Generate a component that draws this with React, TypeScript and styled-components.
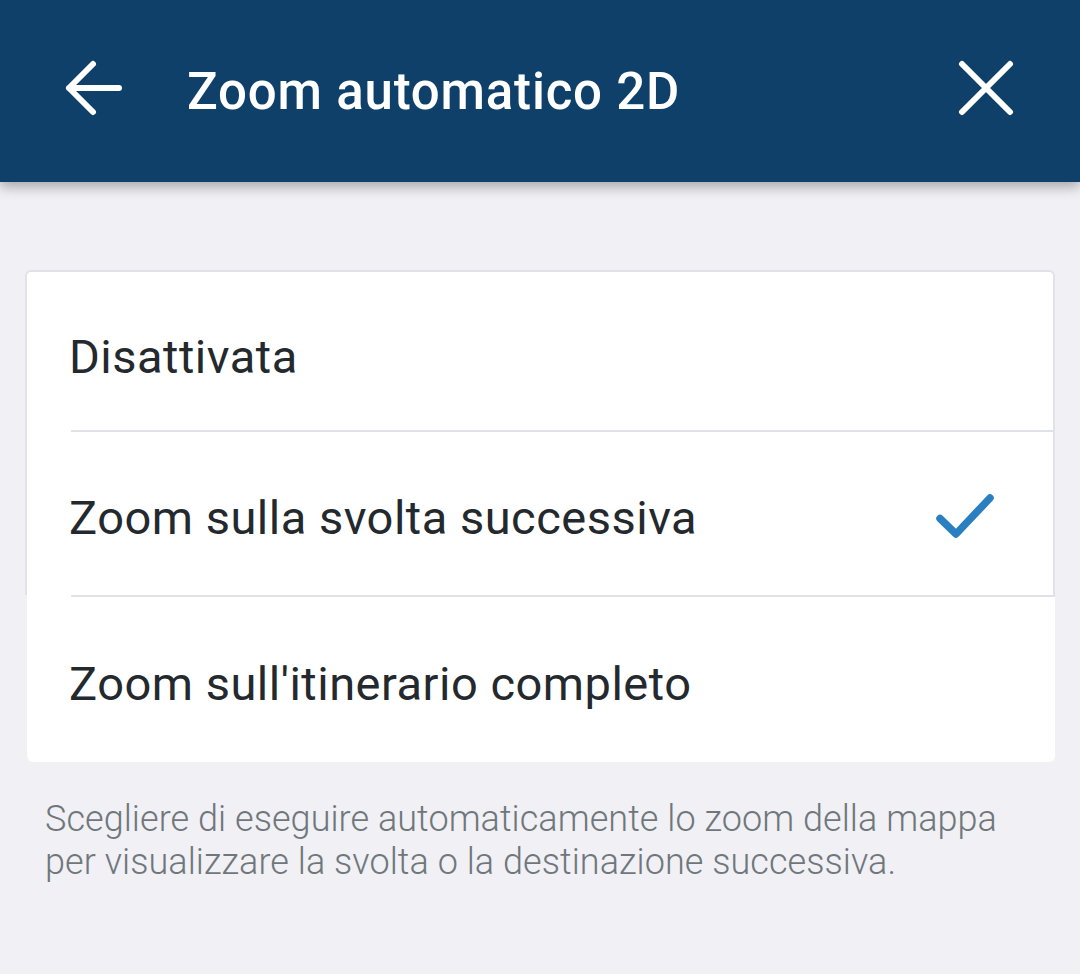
import styled, { createGlobalStyle } from "styled-components";

const GlobalStyle = createGlobalStyle`
    html, body {
        margin: 0;
        padding: 0;
        background: #f0f0f5;
        font-family: Roboto, "Noto Sans", "Liberation Sans", sans-serif;
    }
`;

const options = [
    { label: "Disattivata", selected: false, height: 158 },
    { label: "Zoom sulla svolta successiva", selected: true, height: 165 },
    { label: "Zoom sull'itinerario completo", selected: false, height: 167 },
];

const BackIcon = () => (
    <svg width="60" height="60" viewBox="0 0 60 60" fill="none">
        <path
            d="M55 30H5M29 6L5 30l24 24"
            stroke="#fff"
            strokeWidth="6"
            strokeLinecap="round"
            strokeLinejoin="round"
        />
    </svg>
);

const CloseIcon = () => (
    <svg width="56" height="56" viewBox="0 0 56 56" fill="none">
        <path
            d="M4 4l48 48M52 4L4 52"
            stroke="#fff"
            strokeWidth="6"
            strokeLinecap="round"
        />
    </svg>
);

const CheckIcon = () => (
    <svg width="68" height="50" viewBox="0 0 68 50" fill="none">
        <path
            d="M10 25.5l16 15.5L60 5"
            stroke="#2a7fc1"
            strokeWidth="7.5"
            strokeLinecap="round"
            strokeLinejoin="round"
        />
    </svg>
);

const App = () => {
    const [first, second, third] = options;
    return (
        <Page>
            <GlobalStyle />
            <Header>
                <IconButton>
                    <BackIcon />
                </IconButton>
                <Title>Zoom automatico 2D</Title>
                <CloseButton>
                    <CloseIcon />
                </CloseButton>
            </Header>
            <Content>
                <Card>
                    <BorderedGroup>
                        {[first, second].map((o, i) => (
                            <Row key={o.label} $divider={i > 0} $height={o.height}>
                                <RowText>{o.label}</RowText>
                                {o.selected && (
                                    <CheckWrap>
                                        <CheckIcon />
                                    </CheckWrap>
                                )}
                            </Row>
                        ))}
                    </BorderedGroup>
                    <PlainGroup>
                        <Row $divider $height={third.height}>
                            <RowText>{third.label}</RowText>
                        </Row>
                    </PlainGroup>
                </Card>
                <Hint>
                    Scegliere di eseguire automaticamente lo zoom della mappa
                    <br />
                    per visualizzare la svolta o la destinazione successiva.
                </Hint>
            </Content>
        </Page>
    );
};

const Page = styled.div`
    width: 1080px;
    height: 974px;
    background: #f0f0f5;
    overflow: hidden;
`;

const Header = styled.div`
    position: relative;
    z-index: 1;
    height: 182px;
    background: #0f4069;
    display: flex;
    align-items: center;
    padding: 0 66px 0 64px;
    box-sizing: border-box;
    box-shadow: 0 5px 12px rgba(0, 0, 0, 0.3);
`;

const IconButton = styled.div`
    width: 60px;
    height: 60px;
    display: flex;
    margin-top: -6px;
`;

const CloseButton = styled(IconButton)`
    margin-left: auto;
    width: 56px;
    height: 56px;
`;

const Title = styled.div`
    margin-left: 63px;
    margin-top: 0;
    color: #ffffff;
    font-size: 51px;
    font-weight: 500;
    letter-spacing: 0.8px;
`;

const Content = styled.div`
    padding: 88px 25px 0 25px;
`;

const Card = styled.div`
    display: flex;
    flex-direction: column;
`;

const BorderedGroup = styled.div`
    background: #ffffff;
    border: 2px solid #e1e1e8;
    border-bottom: none;
    border-radius: 6px 6px 0 0;
`;

const PlainGroup = styled.div`
    background: #ffffff;
    margin: 0 0 0 2px;
    border-radius: 0 0 6px 6px;
`;

const Row = styled.div<{ $divider?: boolean; $height: number }>`
    position: relative;
    box-sizing: border-box;
    height: ${({ $height }) => $height}px;
    display: flex;
    align-items: center;
    padding: 10px 55px 0 42px;
    &::before {
        content: "";
        display: ${({ $divider }) => ($divider ? "block" : "none")};
        position: absolute;
        top: 0;
        left: 44px;
        right: 0;
        height: 2px;
        background: #e1e1e8;
    }
`;

const RowText = styled.div`
    font-size: 47px;
    color: #24292e;
    letter-spacing: 0.5px;
`;

const CheckWrap = styled.div`
    margin-left: auto;
    display: flex;
`;

const Hint = styled.div`
    margin: 36px 0 0 20px;
    font-size: 36px;
    font-weight: 300;
    line-height: 43px;
    letter-spacing: 0.05px;
    color: #6f777b;
`;

export default App;
